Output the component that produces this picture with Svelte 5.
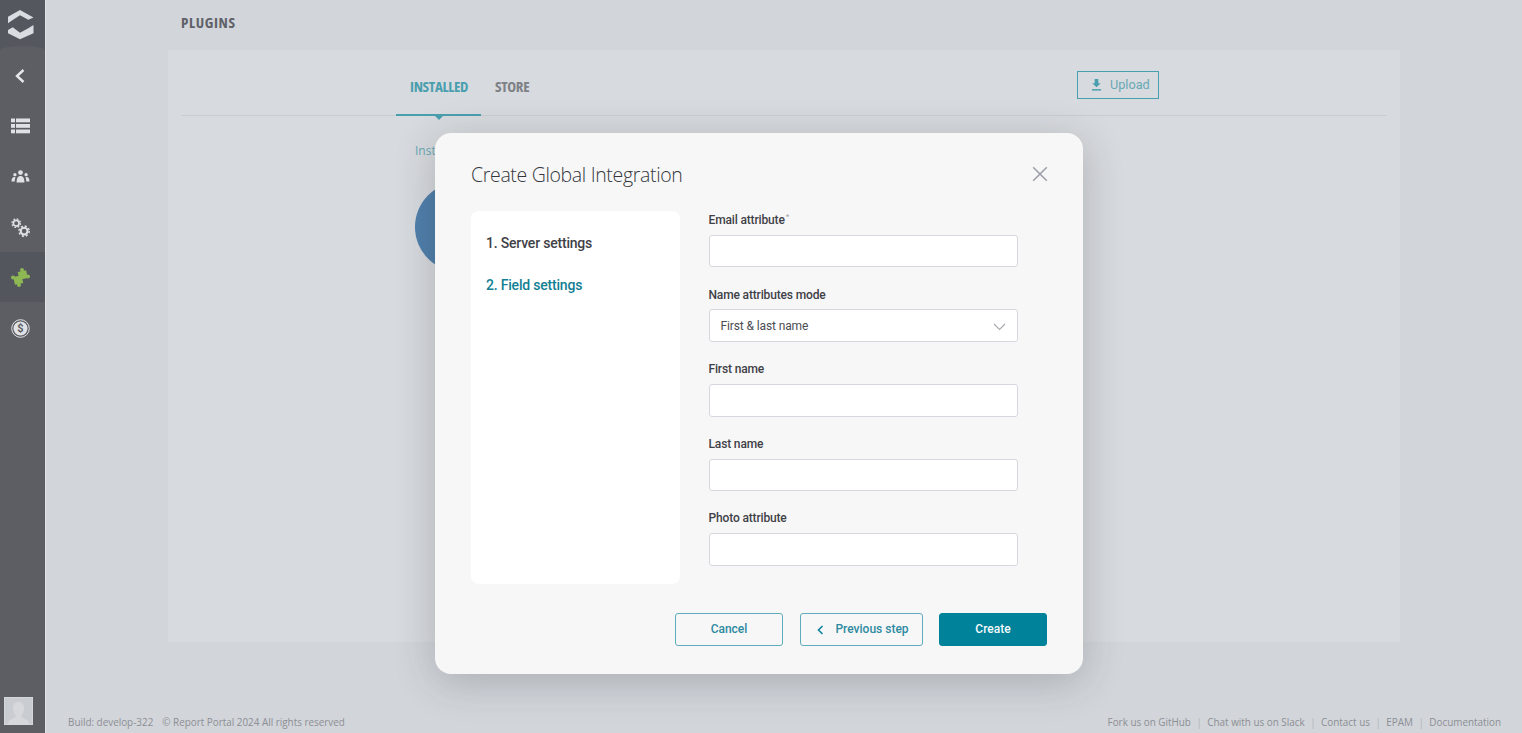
<script>
  const fields = [
    { label: 'Email attribute', required: true },
    { label: 'Name attributes mode', select: 'First & last name' },
    { label: 'First name' },
    { label: 'Last name' },
    { label: 'Photo attribute' }
  ];
  const links = ['Fork us on GitHub', 'Chat with us on Slack', 'Contact us', 'EPAM', 'Documentation'];
</script>

<div class="page">
  <aside class="sidebar">
    <div class="logo">
      <svg width="28" height="31" viewBox="7 9 28 31" fill="#d9dce0">
        <path d="M20 10 33.500 17.500 28.300 19.800 20 15.200 12.700 20 8 23.300V16.700Z"/>
        <path d="M8 30 12.700 27.300 20 32.700 28.300 28.300 33.500 25V33.300L20 39.300 8 33.300Z"/>
      </svg>
    </div>
    <div class="nav-item back">
      <svg width="12" height="16" viewBox="0 0 12 16"><path d="M9.500 2 3 8l6.500 6" fill="none" stroke="#e6e7ea" stroke-width="2.400"/></svg>
    </div>
    <div class="nav-item">
      <svg width="19" height="16" viewBox="0 0 19 16" fill="#dfe1e4">
        <rect x="0" y="0.500" width="4" height="3.800"/><rect x="5" y="0.500" width="14" height="3.800"/>
        <rect x="0" y="6" width="4" height="3.800"/><rect x="5" y="6" width="14" height="3.800"/>
        <rect x="0" y="11.500" width="4" height="3.800"/><rect x="5" y="11.500" width="14" height="3.800"/>
      </svg>
    </div>
    <div class="nav-item">
      <svg width="19" height="13" viewBox="0 0 20 14" fill="#dfe1e4">
        <circle cx="10" cy="2.800" r="2.600"/><path d="M5.800 13.500c0-4.500 1.200-7 4.200-7s4.200 2.500 4.200 7Z"/>
        <circle cx="4" cy="5" r="1.800"/><path d="M.3 12.500c0-3.200 1-5 3.300-5 .5 0 .8.100 1 .2-.6 1.200-.8 2.800-.8 4.800Z"/>
        <circle cx="16" cy="5" r="1.800"/><path d="M19.700 12.500c0-3.200-1-5-3.300-5-.5 0-.8.100-1 .2.600 1.200.8 2.800.8 4.800Z"/>
      </svg>
    </div>
    <div class="nav-item">
      <svg width="19" height="19" viewBox="0 0 20 20" fill="none" stroke="#dfe1e4">
        <circle cx="5.500" cy="5.500" r="3" stroke-width="1.800"/>
        <circle cx="5.500" cy="5.500" r="4.500" stroke-width="1.300" stroke-dasharray="1.800 1.730"/>
        <circle cx="13.800" cy="13.800" r="3.600" stroke-width="2.200"/>
        <circle cx="13.800" cy="13.800" r="5.400" stroke-width="1.500" stroke-dasharray="2.200 2.040"/>
      </svg>
    </div>
    <div class="nav-item active">
      <svg width="19" height="19" viewBox="0 0 19 19" fill="#8db854">
        <rect x="7.500" y="3" width="8.500" height="8" transform="rotate(-12 11.700 7)"/>
        <rect x="3" y="8" width="8.500" height="8" transform="rotate(-12 7.200 12)"/>
        <circle cx="11" cy="2" r="2"/>
        <circle cx="17" cy="8.500" r="2"/>
        <circle cx="2" cy="9.500" r="2"/>
        <circle cx="8" cy="17" r="2"/>
      </svg>
    </div>
    <div class="nav-item">
      <svg width="19" height="19" viewBox="0 0 19 19">
        <circle cx="9.500" cy="9.500" r="8.800" fill="none" stroke="#dfe1e4"/>
        <circle cx="9.500" cy="9.500" r="7" fill="#dfe1e4"/>
        <text x="9.500" y="13" class="dollar">$</text>
      </svg>
    </div>
    <div class="spacer"></div>
    <div class="avatar">
      <svg width="29" height="28" viewBox="0 0 29 28">
        <rect width="29" height="28" fill="#d9dbdf"/>
        <rect x="0.700" y="0.700" width="27.600" height="26.600" fill="#c9ccd1"/>
        <path d="M4 27.300c0-4.300 4-5.300 7.500-6.800v-2.500c-2-2-2.500-4-2.500-7C9 7 11.500 5 14.500 5s5.500 2 5.500 6c0 3-.5 5-2.500 7v2.500c3.500 1.500 7.500 2.500 7.500 6.800Z" fill="#d6d8dc"/>
      </svg>
    </div>
  </aside>

  <main class="content">
    <h1 class="title">PLUGINS</h1>
    <section class="panel">
      <div class="tabs-row">
        <div class="tabs">
          <div class="tab active">INSTALLED<i class="caret"></i></div>
          <div class="tab">STORE</div>
        </div>
        <button class="upload">
          <svg width="11" height="12" viewBox="0 0 12 13" fill="#4a9fae">
            <path d="M4 0h4v4.500h2.600L6 9 1.400 4.500H4Z"/><rect x="1" y="11" width="10" height="1.600"/>
          </svg>
          Upload
        </button>
      </div>
      <div class="plugin-area">
        <div class="hint">Installed plugins</div>
        <div class="plugin-circle"></div>
      </div>
    </section>
    <footer class="footer">
      <div class="build"><span>Build: develop-322</span><span>© Report Portal 2024 All rights reserved</span></div>
      <div class="links">
        {#each links as link, i}
          {#if i > 0}<span class="sep">|</span>{/if}<span>{link}</span>
        {/each}
      </div>
    </footer>
  </main>

  <div class="overlay">
    <div class="modal">
      <div class="modal-head">
        <h2>Create Global Integration</h2>
        <svg class="close" width="16" height="16" viewBox="0 0 16 16"><path d="M1.200 1.200l13.600 13.600M14.800 1.200l-13.600 13.600" stroke="#9a9da5" stroke-width="1.500" fill="none"/></svg>
      </div>
      <div class="modal-body">
        <div class="steps">
          <div class="step">1. Server settings</div>
          <div class="step current">2. Field settings</div>
        </div>
        <div class="form">
          {#each fields as f}
            <div class="field">
              <div class="label">{f.label}{#if f.required}<sup>*</sup>{/if}</div>
              {#if f.select}
                <div class="input select">
                  <span>{f.select}</span>
                  <svg width="13" height="8" viewBox="0 0 13 8"><path d="M1 1l5.500 5.500L12 1" fill="none" stroke="#a6a9af" stroke-width="1.100"/></svg>
                </div>
              {:else}
                <div class="input"></div>
              {/if}
            </div>
          {/each}
        </div>
      </div>
      <div class="modal-foot">
        <button class="btn cancel">Cancel</button>
        <button class="btn prev">
          <svg width="7" height="10" viewBox="0 0 7 10"><path d="M5.500 1 1.500 5l4 4" fill="none" stroke="#0f8299" stroke-width="1.600"/></svg>
          Previous step
        </button>
        <button class="btn primary">Create</button>
      </div>
    </div>
  </div>
</div>

<style>
  :global(body) {
    margin: 0;
    overflow: hidden;
  }
  .page {
    position: relative;
    display: flex;
    width: 1522px;
    height: 733px;
    overflow: hidden;
    background: #d2d5da;
    font-family: Roboto, "Liberation Sans", sans-serif;
  }
  .sidebar {
    width: 45px;
    flex: none;
    display: flex;
    flex-direction: column;
    background: #5c5e64;
    border-right: 1px solid #e0e2e5;
    box-sizing: content-box;
  }
  .logo {
    height: 50px;
    display: flex;
    align-items: flex-start;
    justify-content: flex-start;
    padding: 9px 0 0 7px;
    box-sizing: border-box;
    background: #54575d;
    flex: none;
  }
  .nav-item {
    height: 50.500px;
    display: flex;
    align-items: center;
    justify-content: center;
    flex: none;
    padding: 2px 5px 0 0;
    box-sizing: border-box;
  }
  .nav-item.back {
    height: 54px;
    margin-top: -4px;
    padding-top: 6px;
    background: #5c5e64;
    border-radius: 50% 50% 0 0 / 4px 4px 0 0;
  }
  .nav-item.active {
    background: #53565c;
    padding-top: 1px;
  }
  .dollar {
    font-size: 11px;
    font-weight: 700;
    text-anchor: middle;
    fill: #5c5e64;
  }
  .spacer { flex: 1; }
  .avatar {
    height: 28px;
    margin: 0 0 8px 4px;
    width: 29px;
  }
  .avatar svg { display: block; }
  .content {
    flex: 1;
    min-width: 0;
    display: flex;
    flex-direction: column;
    padding: 0 21px 0 22px;
  }
  .title {
    margin: 0;
    height: 50px;
    padding: 13px 0 0 113px;
    box-sizing: border-box;
    font: 700 15px/18px "Open Sans", sans-serif;
    font-stretch: condensed;
    letter-spacing: 0.600px;
    color: #5f6168;
  }
  .panel {
    margin: 0 100px;
    width: 1232px;
    height: 592px;
    background: #d7dade;
    padding: 0 13px;
    box-sizing: border-box;
    flex: none;
  }
  .tabs-row {
    position: relative;
    height: 66px;
    border-bottom: 1px solid #c9ccd1;
    display: flex;
    padding-left: 215px;
    box-sizing: border-box;
  }
  .tabs { display: flex; }
  .tab {
    position: relative;
    font: 700 15px/16px "Open Sans", sans-serif;
    font-stretch: condensed;
    letter-spacing: -0.350px;
    color: #7d8084;
    padding: 28px 0 0;
    margin-left: 14px;
    white-space: nowrap;
  }
  .tab.active {
    margin-left: 0;
    width: 85px;
    box-sizing: border-box;
    padding-left: 14px;
    color: #4a9fae;
    border-bottom: 2px solid #4a9fae;
    height: 66px;
  }
  .caret {
    position: absolute;
    left: 39px;
    bottom: -6px;
    border: 4px solid transparent;
    border-top-color: #4a9fae;
    border-bottom: 0;
  }
  .upload {
    position: absolute;
    left: 896px;
    top: 21px;
    width: 82px;
    height: 28px;
    border: 1px solid #4a9fae;
    background: transparent;
    color: #69a9b5;
    font: 400 12.700px/1 Roboto, sans-serif;
    display: flex;
    align-items: center;
    gap: 8px;
    padding: 0 0 0 13px;
    box-sizing: border-box;
  }
  .plugin-area { position: relative; }
  .hint {
    padding: 27px 0 0 234px;
    font: 400 12px/16px "Open Sans", sans-serif;
    color: #6ba7b3;
  }
  .plugin-circle {
    position: absolute;
    left: 234px;
    top: 66px;
    width: 90px;
    height: 90px;
    border-radius: 50%;
    background: #4f7fab;
  }
  .footer {
    margin-top: auto;
    height: 21px;
    padding-top: 3px;
    box-sizing: border-box;
    display: flex;
    justify-content: space-between;
    font: 400 9.900px/14px "Open Sans", sans-serif;
    color: #8c8f94;
    white-space: nowrap;
  }
  .build { display: flex; gap: 9px; }
  .links { display: flex; gap: 5.500px; }
  .sep { color: #b3b6ba; }
  .overlay {
    position: absolute;
    inset: 0;
    pointer-events: none;
  }
  .modal {
    position: absolute;
    left: 435px;
    top: 133px;
    width: 648px;
    height: 541px;
    box-sizing: border-box;
    padding: 0 36px;
    background: #f7f7f8;
    border-radius: 16px;
    box-shadow: 0 8px 40px rgba(40, 44, 52, 0.24);
    display: flex;
    flex-direction: column;
  }
  .modal-head {
    height: 78px;
    display: flex;
    justify-content: space-between;
    align-items: flex-start;
    flex: none;
  }
  h2 {
    margin: 28px 0 0;
    font: 300 19.500px/28px "Open Sans", sans-serif;
    color: #35373c;
    letter-spacing: -0.340px;
  }
  .close { margin: 33px -1px 0 0; }
  .modal-body {
    display: flex;
    gap: 28.500px;
    height: 373px;
    flex: none;
  }
  .steps {
    width: 209px;
    height: 373px;
    background: #fff;
    border-radius: 8px;
    box-sizing: border-box;
    padding: 23px 15px;
    display: flex;
    flex-direction: column;
    gap: 24px;
  }
  .step {
    font: 500 14px/18px Roboto, sans-serif;
    letter-spacing: -0.200px;
    color: #3f4147;
  }
  .step.current { color: #137f93; }
  .form {
    width: 309.600px;
    display: flex;
    flex-direction: column;
  }
  .field {
    height: 74.600px;
    flex: none;
  }
  .label {
    height: 23.800px;
    padding-top: 1px;
    box-sizing: border-box;
    font: 500 12px/16px Roboto, sans-serif;
    letter-spacing: -0.150px;
    color: #3f4147;
  }
  sup {
    font-size: 8px;
    line-height: 0;
    color: #a5a8ae;
    margin-left: 1px;
  }
  .input {
    height: 32.600px;
    box-sizing: border-box;
    background: #fff;
    border: 1px solid #d5d8de;
    border-radius: 3px;
  }
  .select {
    display: flex;
    align-items: center;
    justify-content: space-between;
    padding: 0 11px 0 11px;
    font: 400 12px/16px Roboto, sans-serif;
    letter-spacing: -0.120px;
    color: #4b4d53;
  }
  .select svg { margin-top: 3px; }
  .modal-foot {
    display: flex;
    justify-content: flex-end;
    gap: 16px;
    margin-top: 29px;
  }
  .btn {
    width: 108px;
    height: 33px;
    box-sizing: border-box;
    background: transparent;
    border: 1px solid #5facbc;
    border-radius: 3px;
    color: #2e8aa0;
    font: 500 12px/1 Roboto, sans-serif;
    display: flex;
    align-items: center;
    justify-content: center;
    gap: 11px;
    padding: 0 0 1px;
  }
  .btn svg { margin-top: 1px; }
  .btn.cancel { margin-right: 1px; }
  .btn.prev { width: 123px; padding-left: 3px; }
  .btn.primary {
    background: #00829b;
    border-color: #00829b;
    color: #f5fbfc;
  }
</style>
